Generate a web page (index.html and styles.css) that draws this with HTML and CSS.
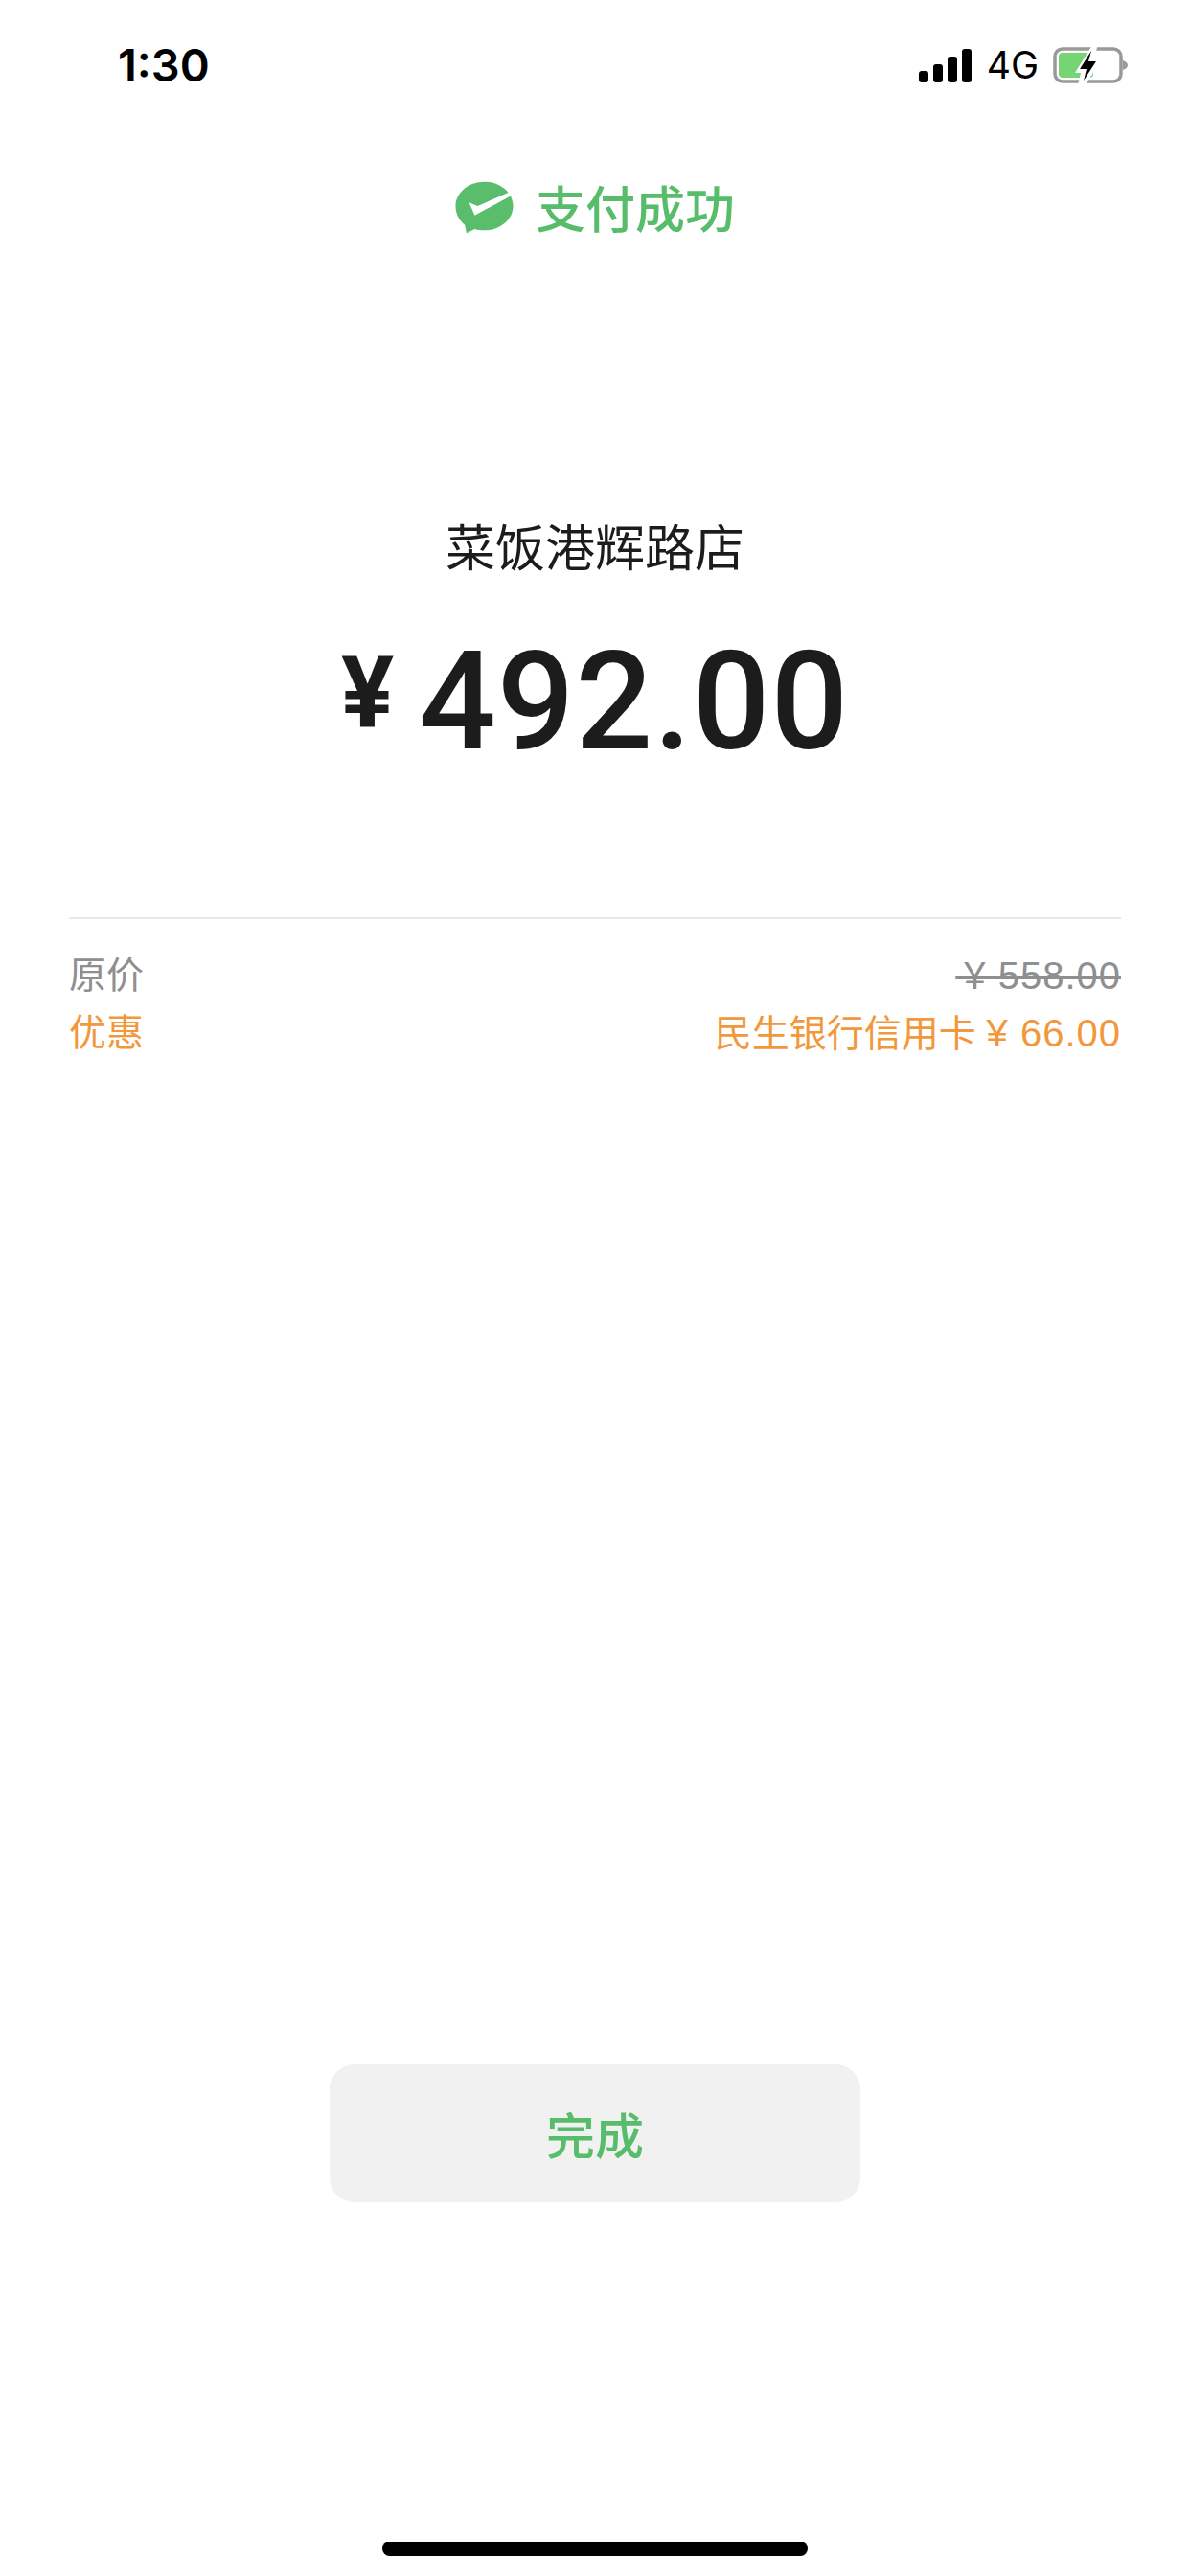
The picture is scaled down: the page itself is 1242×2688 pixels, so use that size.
FILE: index.html

```html
<!DOCTYPE html>
<html lang="zh-CN">
<head>
    <meta charset="UTF-8">
    <title>支付成功</title>
    <meta name="viewport" content="width=device-width, initial-scale=1.0">
    <link rel="stylesheet" href="styles.css">
</head>
<body>
    <div class="status-bar">
        <div class="time">1:30</div>
        <div class="status-icons">
            <svg class="signal" width="55" height="35" viewBox="0 0 55 35">
                <rect x="0" y="23" width="10" height="12" rx="3"/>
                <rect x="15" y="16" width="10" height="19" rx="3"/>
                <rect x="30" y="8" width="10" height="27" rx="3"/>
                <rect x="45" y="0" width="10" height="35" rx="3"/>
            </svg>
            <span class="network">4G</span>
            <svg class="battery" width="80" height="38" viewBox="0 0 80 38">
                <rect x="2" y="2" width="69" height="34" rx="8" fill="none" stroke="#999" stroke-width="3.5"/>
                <path d="M73 14 L73 24 Q78 22 78 19 Q78 16 73 14 Z" fill="#999"/>
                <rect x="6" y="6" width="36" height="26" rx="4" fill="#75d572"/>
                <path d="M41 -2 L23 27 L29 27 L26 40 L34 40 L50 13 L42 13 L47 -2 Z" fill="#fff"/>
                <path d="M40 4 L28 23 L35 23 L32 35 L45 15 L37 15 Z" fill="#000"/>
            </svg>
        </div>
    </div>

    <div class="result">
        <svg class="wechat-logo" width="61" height="55" viewBox="80 85 182 165">
            <path d="M171 87 C221 87 261 121 261 163 C261 205 221 239 171 239 C160 239 150 238 141 235 L115 248 L110 222 C92 208 81 187 81 163 C81 121 121 87 171 87 Z" fill="#5abd6b"/>
            <path d="M123 152 L150 163 L246 121 L256 130 L141 192 Z" fill="#fff"/>
        </svg>
        <span class="result-text">支付成功</span>
    </div>

    <div class="store">菜饭港辉路店</div>
    <div class="amount">
        <span class="yen">¥</span>
        <span class="digits">492.00</span>
    </div>

    <div class="details">
        <div class="row gray">
            <span>原价</span>
            <span class="num"><s>&thinsp;¥ 558.00</s></span>
        </div>
        <div class="row orange">
            <span>优惠</span>
            <span>民生银行信用卡 <span class="num">¥ 66.00</span></span>
        </div>
    </div>

    <button class="done-btn">完成</button>
    <div class="home-bar"></div>
</body>
</html>
```

FILE: styles.css

```css
body {
    margin: 0;
    padding: 0;
    width: 1242px;
    height: 2688px;
    overflow: hidden;
    background: #fff;
    color: #1c1c1c;
    font-family: "Liberation Sans", "Noto Sans CJK SC", sans-serif;
    display: flex;
    flex-direction: column;
    align-items: center;
}
body > * {
    flex-shrink: 0;
}
.status-bar {
    width: 100%;
    box-sizing: border-box;
    padding: 40px 63px 0 123px;
    height: 100px;
    display: flex;
    justify-content: space-between;
    align-items: flex-start;
    color: #000;
}
.time {
    font-family: Inter, sans-serif;
    font-size: 47px;
    font-weight: 600;
    line-height: 56px;
}
.status-icons {
    display: flex;
    align-items: center;
    padding-top: 9px;
}
.signal {
    margin-right: 16px;
}
.network {
    font-family: Inter, sans-serif;
    font-size: 39px;
    line-height: 38px;
    margin-right: 15px;
}
.result {
    margin-top: 88px;
    display: flex;
    align-items: center;
    gap: 23px;
    height: 56px;
}
.result-text {
    font-family: "Noto Sans CJK SC", sans-serif;
    font-size: 52px;
    font-weight: 500;
    line-height: 56px;
    color: #57bd6a;
}
.store {
    margin-top: 295px;
    font-family: "Noto Sans CJK SC", sans-serif;
    font-size: 52px;
    font-weight: 400;
    line-height: 60px;
}
.amount {
    margin-top: 59px;
    display: flex;
    align-items: flex-start;
    height: 150px;
    gap: 26px;
}
.yen {
    margin-top: 13px;
    font-family: Roboto, sans-serif;
    font-size: 103px;
    font-weight: 700;
    line-height: 104px;
}
.digits {
    display: block;
    font-family: Roboto, sans-serif;
    font-size: 142px;
    font-weight: 500;
    line-height: 150px;
    letter-spacing: 1px;
}
.details {
    margin-top: 149px;
    width: 1098px;
    border-top: 2px solid #e8e8e8;
    padding-top: 29px;
}
.row {
    display: flex;
    justify-content: space-between;
    font-size: 39px;
    line-height: 60px;
}
.num {
    font-size: 40px;
    letter-spacing: 1px;
}
.gray {
    color: #8f8f8f;
}
.orange {
    color: #f2983c;
}
.done-btn {
    margin-top: 1045px;
    width: 554px;
    height: 144px;
    border: none;
    border-radius: 26px;
    background: #f1f1f1;
    color: #57bd6a;
    font-family: "Noto Sans CJK SC", sans-serif;
    font-size: 51px;
    font-weight: 500;
}
.home-bar {
    margin-top: 354px;
    width: 444px;
    height: 15px;
    border-radius: 8px;
    background: #000;
}
```
